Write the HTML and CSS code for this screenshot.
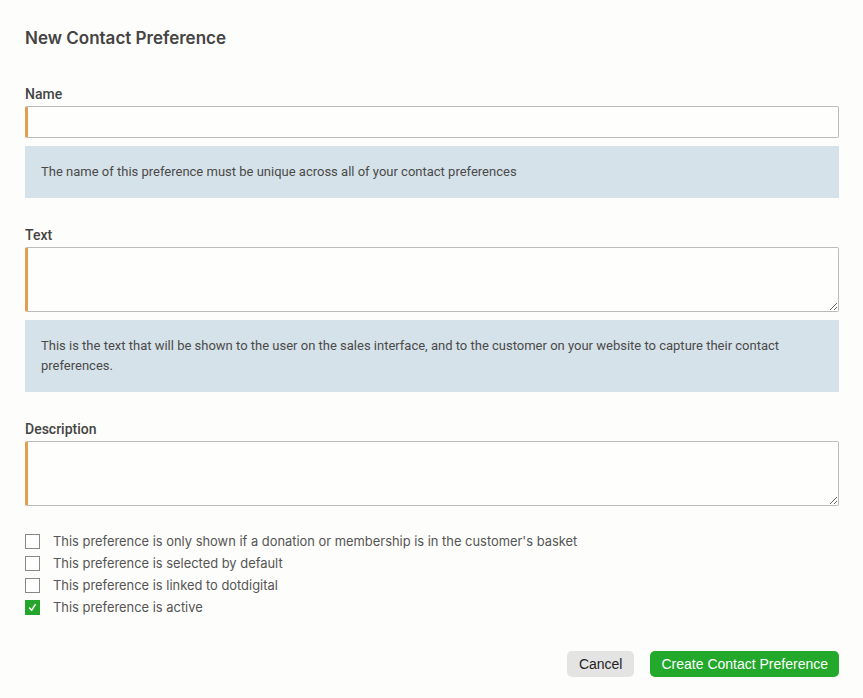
FILE: index.html
```html
<!DOCTYPE html>
<html lang="en">
<head>
  <meta charset="UTF-8" />
  <meta name="viewport" content="width=device-width, initial-scale=1.0" />
  <title>New Contact Preference</title>
  <link rel="stylesheet" href="styles.css">
</head>
<body>
  <form class="pref-form">
    <h1 class="pref-title">New Contact Preference</h1>

    <div class="field">
      <label class="field-label" for="prefName">Name</label>
      <input id="prefName" class="field-input" type="text" />
      <p class="field-help">The name of this preference must be unique across all of your contact preferences</p>
    </div>

    <div class="field">
      <label class="field-label" for="prefText">Text</label>
      <textarea id="prefText" class="field-input field-area"></textarea>
      <p class="field-help">This is the text that will be shown to the user on the sales interface, and to the customer on your website to capture their contact preferences.</p>
    </div>

    <div class="field field-last">
      <label class="field-label" for="prefDesc">Description</label>
      <textarea id="prefDesc" class="field-input field-area"></textarea>
    </div>

    <ul class="checks">
      <li class="check">
        <span class="check-box"></span>
        <span class="check-text">This preference is only shown if a donation or membership is in the customer's basket</span>
      </li>
      <li class="check">
        <span class="check-box"></span>
        <span class="check-text">This preference is selected by default</span>
      </li>
      <li class="check">
        <span class="check-box"></span>
        <span class="check-text">This preference is linked to dotdigital</span>
      </li>
      <li class="check">
        <span class="check-box is-checked">
          <svg viewBox="0 0 15 15" width="15" height="15"><path d="M4.6 8 L6.6 10.3 L10.2 4.6" fill="none" stroke="#fff" stroke-width="1.5" stroke-linecap="round" stroke-linejoin="round"/></svg>
        </span>
        <span class="check-text">This preference is active</span>
      </li>
    </ul>

    <div class="actions">
      <button type="button" class="btn btn-cancel">Cancel</button>
      <button type="submit" class="btn btn-create">Create Contact Preference</button>
    </div>
  </form>
</body>
</html>
```

FILE: styles.css
```css
body {
  margin: 0;
  background-color: #fdfdfb;
  font-family: 'Roboto', sans-serif;
  color: #444;
}

.pref-form {
  padding: 28px 24px 0 25px;
}

.pref-title {
  font-family: 'Inter', sans-serif;
  font-size: 17px;
  font-weight: 600;
  line-height: 20px;
  color: #444;
  margin: 0 0 38px;
}

.field {
  margin-bottom: 29px;
}

.field-last {
  margin-bottom: 0;
}

.field-label {
  display: block;
  font-size: 14px;
  font-weight: 500;
  line-height: 16px;
  color: #444;
  margin-bottom: 4px;
}

.field-input {
  display: block;
  box-sizing: border-box;
  width: 100%;
  height: 32px;
  margin: 0;
  background: #fefefc;
  border: 1px solid #bbb;
  border-left: 3px solid #e0a050;
  border-radius: 2px;
  font-family: 'Roboto', sans-serif;
  font-size: 14px;
  padding: 4px 8px;
}

.field-area {
  height: 65px;
  resize: vertical;
}

.field-help {
  margin: 8px 0 0;
  background-color: #d6e2e9;
  padding: 16px;
  font-size: 13px;
  line-height: 20px;
  color: #4a4a4a;
}

.checks {
  list-style: none;
  margin: 24px 0 0;
  padding: 0;
}

.check {
  display: flex;
  align-items: center;
  height: 22px;
}

.check-box {
  box-sizing: border-box;
  width: 15px;
  height: 15px;
  border: 1px solid #888;
  background: #fff;
  margin-right: 13px;
  flex-shrink: 0;
}

.check-box.is-checked {
  border: none;
  background-color: #25a52b;
}

.check-box svg {
  display: block;
}

.check-text {
  font-family: 'Inter', sans-serif;
  font-size: 12.9px;
  color: #555;
}

.actions {
  display: flex;
  justify-content: flex-end;
  gap: 16px;
  margin-top: 33px;
}

.btn {
  height: 26px;
  padding: 0 12px;
  border: none;
  border-radius: 5px;
  font-family: 'Liberation Sans', Arial, sans-serif;
  font-size: 14px;
  cursor: pointer;
}

.btn-cancel {
  background-color: #e4e4e4;
  color: #222;
}

.btn-create {
  padding: 0 11px;
  background-color: #22a82a;
  color: #fff;
}
```
